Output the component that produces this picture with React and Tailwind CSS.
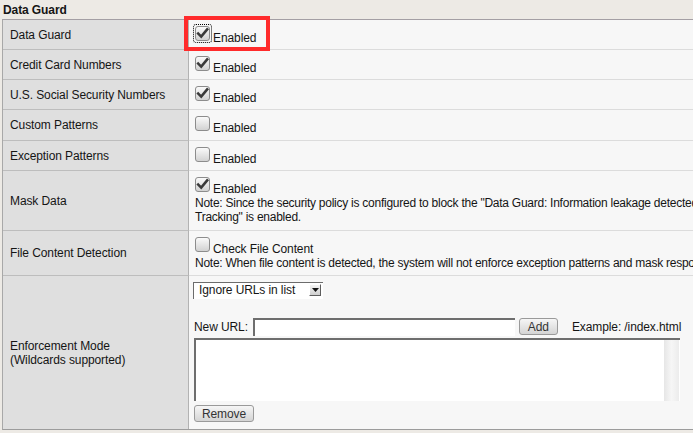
import React from "react";

function Check({ checked, focus }) {
  const box = (
    <span className="w-[15px] h-[15px] rounded-[3px] border border-[#8c8c8c] bg-linear-to-b from-[#fafafa] to-[#d2d2d2] flex items-center justify-center shrink-0">
      {checked && (
        <svg width="13" height="13" viewBox="0 0 13 13">
          <path d="M2.2 6.6 L5.2 9.6 L11.2 2.4" fill="none" stroke="#3a3a3a" strokeWidth="2.6" strokeLinecap="square" />
        </svg>
      )}
    </span>
  );
  if (focus) {
    return <span className="outline-1 outline-dotted outline-black outline-offset-[1px] rounded-[1px] flex shrink-0">{box}</span>;
  }
  return box;
}

function Label({ children }) {
  return (
    <div className="w-[186px] shrink-0 bg-[#dfdfdf] border-r border-b border-r-[#b2b2b2] border-b-[#bdbdbd] flex items-center pl-[7px] leading-[14px]">
      {children}
    </div>
  );
}

function CheckLine({ checked, focus, text }) {
  return (
    <div className="flex items-start">
      <span className="ml-[1px]">
        <Check checked={checked} focus={focus} />
      </span>
      <span className="ml-[3px] mt-[5px] leading-[14px] whitespace-nowrap">{text}</span>
    </div>
  );
}

function Btn({ children, w }) {
  return (
    <span className={`${w} h-[17px] rounded-[3px] border border-[#9a9a9a] bg-linear-to-b from-[#f6f6f6] to-[#d4d4d4] flex items-center justify-center leading-[14px] text-[#333] shrink-0`}>
      {children}
    </span>
  );
}

export default function App() {
  return (
    <div className="relative w-[693px] h-[433px] overflow-hidden bg-[#edeae5] text-[12px] tracking-[-0.1px] text-[#151515] font-['Liberation_Sans',Arial,sans-serif]">
      <div className="h-[19px] pl-[3px] pt-[3px] font-bold leading-[14px]">Data Guard</div>
      <div className="ml-[2px] w-[1000px] border-t border-l border-t-[#a49fa4] border-l-[#a8a8a8] border-b border-b-[#9c9c9c]">
        <div className="flex h-[30px]">
          <Label>Data Guard</Label>
          <div className="flex-1 bg-[#f7f7f7] border-b border-[#dcdcdc] pl-[5px] pt-[6px]">
            <CheckLine checked focus text="Enabled" />
          </div>
        </div>
        <div className="flex h-[30px]">
          <Label>Credit Card Numbers</Label>
          <div className="flex-1 bg-[#f7f7f7] border-b border-[#dcdcdc] pl-[5px] pt-[6px]">
            <CheckLine checked text="Enabled" />
          </div>
        </div>
        <div className="flex h-[30px]">
          <Label>U.S. Social Security Numbers</Label>
          <div className="flex-1 bg-[#f7f7f7] border-b border-[#dcdcdc] pl-[5px] pt-[6px]">
            <CheckLine checked text="Enabled" />
          </div>
        </div>
        <div className="flex h-[31px]">
          <Label>Custom Patterns</Label>
          <div className="flex-1 bg-[#f7f7f7] border-b border-[#dcdcdc] pl-[5px] pt-[6px]">
            <CheckLine text="Enabled" />
          </div>
        </div>
        <div className="flex h-[30px]">
          <Label>Exception Patterns</Label>
          <div className="flex-1 bg-[#f7f7f7] border-b border-[#dcdcdc] pl-[5px] pt-[6px]">
            <CheckLine text="Enabled" />
          </div>
        </div>
        <div className="flex h-[60px]">
          <Label>Mask Data</Label>
          <div className="flex-1 bg-[#f7f7f7] border-b border-[#dcdcdc] pl-[5px] pt-[6px] leading-[14px]">
            <CheckLine checked text="Enabled" />
            <div className="pl-[1px] whitespace-nowrap tracking-[-0.25px]">
              Note: Since the security policy is configured to block the "Data Guard: Information leakage detected" violation, data masking will only be applied when "Session
            </div>
            <div className="pl-[1px] whitespace-nowrap tracking-[-0.25px]">Tracking" is enabled.</div>
          </div>
        </div>
        <div className="flex h-[45px]">
          <Label>File Content Detection</Label>
          <div className="flex-1 bg-[#f7f7f7] border-b border-[#dcdcdc] pl-[5px] pt-[6px] leading-[14px]">
            <CheckLine text="Check File Content" />
            <div className="pl-[1px] whitespace-nowrap tracking-[-0.25px]">
              Note: When file content is detected, the system will not enforce exception patterns and mask response data.
            </div>
          </div>
        </div>
        <div className="flex h-[153px]">
          <div className="w-[186px] shrink-0 bg-[#dfdfdf] border-r border-r-[#b2b2b2] flex flex-col justify-center pl-[7px] leading-[14px]">
            <div>Enforcement Mode</div>
            <div>(Wildcards supported)</div>
          </div>
          <div className="flex-1 bg-[#f7f7f7] pl-[4px] pt-[6px] leading-[14px]">
            <div className="w-[130px] h-[17px] flex bg-white border-t border-l border-[#6c6c6c]">
              <span className="flex-1 pl-[5px] leading-[15px] whitespace-nowrap">Ignore URLs in list</span>
              <span className="w-[12px] h-[12px] mt-[1px] mr-[2px] bg-linear-to-b from-[#f4f4f4] to-[#cfcfcf] border-r border-b border-[#5e5e5e] border-t border-l border-t-white border-l-white flex items-center justify-center">
                <svg width="7" height="4" viewBox="0 0 7 4">
                  <path d="M0 0 L7 0 L3.5 4 Z" fill="#111" />
                </svg>
              </span>
            </div>
            <div className="flex items-center mt-[18px] h-[19px]">
              <span className="ml-[1px] whitespace-nowrap">New URL:</span>
              <span className="ml-[5px] w-[262px] h-[18px] bg-white border-t-2 border-l-2 border-[#6e6e6e]" />
              <span className="ml-[4px]">
                <Btn w="w-[39px]">Add</Btn>
              </span>
              <span className="ml-[14px] whitespace-nowrap">Example: /index.html</span>
            </div>
            <div className="mt-[2px] ml-[1px] w-[486px] h-[63px] bg-white border-t-2 border-l-2 border-[#6e6e6e] flex justify-end">
              <span className="w-[15px] h-full bg-linear-to-r from-[#e6e6e6] via-[#f6f6f6] to-[#ececec] mr-[1px]" />
            </div>
            <div className="mt-[4px] ml-[1px] flex">
              <Btn w="w-[60px]">Remove</Btn>
            </div>
          </div>
        </div>
      </div>
      <div className="absolute left-[184px] top-[16px] w-[86px] h-[35px] border-4 border-[#ff2b2b]" />
    </div>
  );
}
